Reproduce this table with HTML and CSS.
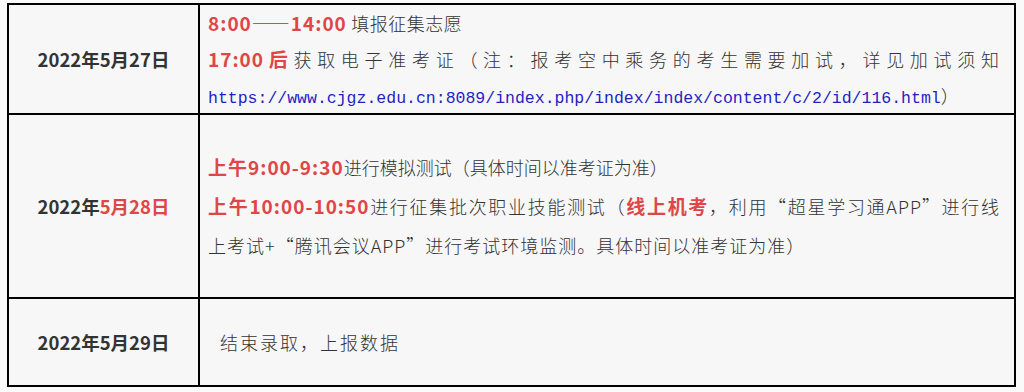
FILE: index.html
```html
<!DOCTYPE html>
<html lang="zh-CN">
<head>
<meta charset="utf-8">
<title>征集志愿时间安排</title>
<link rel="stylesheet" href="styles.css">
</head>
<body>
<table class="schedule">
  <colgroup><col class="col-date"><col class="col-desc"></colgroup>
  <tbody>
    <tr class="row row-1">
      <td class="date">2022年5月27日</td>
      <td class="desc">
        <p class="line line-tight"><span class="hl">8:00——14:00</span> 填报征集志愿</p>
        <p class="line just"><span class="hl">17:00后</span>获取电子准考证（注：报考空中乘务的考生需要加试，详见加试须知<span class="url">https://www.cjgz.edu.cn:8089/index.php/index/index/content/c/2/id/116.html</span>）</p>
      </td>
    </tr>
    <tr class="row row-2">
      <td class="date">2022年<span class="red">5月28日</span></td>
      <td class="desc">
        <p class="line loose line-flat"><span class="hl">上午9:00-9:30</span>进行模拟测试（具体时间以准考证为准）</p>
        <p class="line loose fill"><span class="hl">上午10:00-10:50</span>进行征集批次职业技能测试（<span class="hl">线上机考</span>，利用“超星学习通APP”进行线</p>
        <p class="line loose">上考试+“腾讯会议APP”进行考试环境监测。具体时间以准考证为准）</p>
      </td>
    </tr>
    <tr class="row row-3">
      <td class="date">2022年5月29日</td>
      <td class="desc">
        <p class="line indent wide">结束录取，上报数据</p>
      </td>
    </tr>
  </tbody>
</table>
</body>
</html>
```
FILE: styles.css
```css
html, body {
  margin: 0;
  background: #fafafa;
}
body {
  padding: 3px 8px 0 7px;
  font-family: "Noto Sans CJK SC", "Noto Sans", sans-serif;
  color: #333;
}
.schedule {
  width: 1009px;
  table-layout: fixed;
  border-collapse: separate;
  border-spacing: 0;
  border-top: 2px solid #000;
  border-left: 2px solid #000;
  background: #f7f7f7;
}
.col-date { width: 191px; }
.col-desc { width: 816px; }
.schedule td {
  border-right: 2px solid #000;
  border-bottom: 2px solid #000;
  vertical-align: middle;
  padding: 0;
  overflow: hidden;
}
.row-1 { height: 110px; }
.row-2 { height: 184px; }
.row-3 { height: 88px; }
.row-1 .desc { height: 108px; }
.date {
  text-align: center;
  font-size: 18.5px;
  font-weight: 700;
  color: #333;
}
.red { color: #e04646; }
.desc {
  padding: 0 14px 0 8px !important;
  font-size: 18px;
  font-weight: 300;
  letter-spacing: 1px;
}
.line {
  margin: 0;
  line-height: 36px;
  height: 36px;
}
.line.just { height: 72px; }
.line.loose { line-height: 39px; height: 39px; }
.line-tight { letter-spacing: 0.5px; }
.line-flat { letter-spacing: 0; }
.just { text-align: justify; }
.fill { text-align: justify; text-align-last: justify; }
.hl {
  color: #e04646;
  font-weight: 700;
  font-size: 19px;
  line-height: 1;
  letter-spacing: 1px;
}
.url {
  font-family: "Liberation Mono", monospace;
  font-size: 16.5px;
  line-height: 1;
  letter-spacing: 0;
  color: #1f1fc4;
  white-space: nowrap;
  font-weight: 400;
}
.indent { padding-left: 12px; }
.wide { letter-spacing: 2px; }
```
